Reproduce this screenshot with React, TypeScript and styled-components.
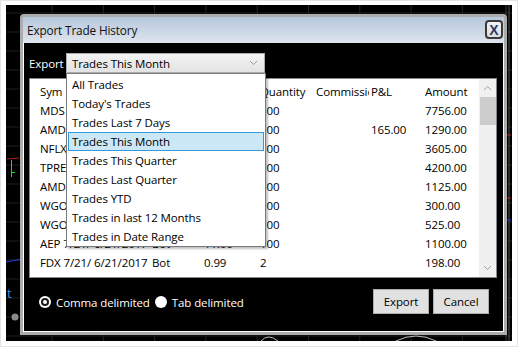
import React from "react";
import styled, { createGlobalStyle } from "styled-components";

const GlobalStyle = createGlobalStyle`
  html, body { margin: 0; padding: 0; background: #ffffff; }
  body { font-family: "Open Sans", "Noto Sans", sans-serif; font-size: 12px; }
  * { box-sizing: border-box; }
`;

const UI = `"Open Sans", "Noto Sans", sans-serif`;

const Frame = styled.div`
  width: 518px;
  height: 347px;
  border: 1px solid #e4e4e4;
  padding: 4px 5px 5px 5px;
  background: #fff;
`;

const Screen = styled.div`
  position: relative;
  width: 506px;
  height: 336px;
  background: #000;
  overflow: hidden;
`;

const ChartLayer = styled.svg`
  position: absolute;
  inset: 0;
`;

const Dialog = styled.div`
  position: absolute;
  left: 14px;
  top: 9px;
  width: 487px;
  height: 321px;
  border: 3px solid #acacac;
  border-radius: 4px 4px 0 0;
  display: flex;
  flex-direction: column;
  background: #000;
`;

const TitleBar = styled.div`
  height: 26px;
  flex: none;
  display: flex;
  align-items: flex-start;
  justify-content: space-between;
  background: linear-gradient(#b6c7dc, #dfe5ed);
  padding-left: 4px;
`;

const Title = styled.span`
  font-family: ${UI};
  font-size: 11.8px;
  letter-spacing: -0.15px;
  color: #111;
  line-height: 26px;
`;

const CloseButton = styled.div`
  width: 18px;
  height: 19px;
  margin: 3px 1px 0 0;
  border: 2px solid #3a3a3a;
  border-radius: 4px;
  background: linear-gradient(#f4f4f4, #dcdcdc);
  display: flex;
  align-items: center;
  justify-content: center;
  font-family: "Liberation Sans", Arial, sans-serif;
  font-weight: bold;
  font-size: 14px;
  color: #2a3a6a;
  line-height: 1;
`;

const Body = styled.div`
  flex: 1;
  display: flex;
  flex-direction: column;
  border: 1px solid #ffffff;
  border-top: none;
  background: #000;
  position: relative;
`;

const ExportRow = styled.div`
  display: flex;
  align-items: center;
  padding: 10px 0 0 5px;
  height: 30px;
`;

const WhiteLabel = styled.span<{ $w?: number }>`
  font-family: ${UI};
  font-size: 11.5px;
  letter-spacing: -0.1px;
  color: #fff;
  white-space: nowrap;
  ${(p) => (p.$w ? `width: ${p.$w}px;` : "")}
`;

const SelectWrap = styled.div`
  position: relative;
  margin-left: 5px;
  width: 199px;
  height: 20px;
  z-index: 2;
`;

const SelectBox = styled.div`
  height: 20px;
  border: 1px solid #acacac;
  background: linear-gradient(#f3f3f3, #e3e3e3);
  display: flex;
  align-items: center;
  justify-content: space-between;
  padding: 0 6px 0 5px;
  font-family: ${UI};
  font-size: 11.5px;
  letter-spacing: -0.1px;
  color: #000;
`;

const List = styled.div`
  position: absolute;
  left: 0;
  top: 20px;
  width: 200px;
  border: 1px solid #7a7a7a;
  background: #fff;
  padding: 1px 0 0 0;
  box-shadow: 2px 2px 2px rgba(0, 0, 0, 0.25);
`;

const ListItem = styled.div<{ $active?: boolean }>`
  height: 19px;
  margin: 0 1px;
  padding-left: 3px;
  border: 1px solid ${(p) => (p.$active ? "#3399dd" : "transparent")};
  background: ${(p) => (p.$active ? "#cce8f7" : "transparent")};
  font-family: ${UI};
  font-size: 11.5px;
  letter-spacing: -0.1px;
  line-height: 17px;
  color: #000;
  white-space: nowrap;
`;

const Table = styled.div`
  margin: 5px 0 0 5px;
  width: 468px;
  height: 200px;
  border: 1px solid #828790;
  background: #fff;
  display: flex;
`;

const GridArea = styled.div`
  flex: 1;
  overflow: hidden;
  padding: 3px 0 0 8px;
`;

const Row = styled.div`
  display: grid;
  grid-template-columns: 54px 58px 52px 56px 56px 55px 54px 56px;
  height: 19px;
`;

const Cell = styled.div`
  padding-left: 2px;
  overflow: hidden;
  white-space: nowrap;
  font-family: ${UI};
  font-size: 11.5px;
  letter-spacing: -0.1px;
  line-height: 19px;
  color: #000;
`;

const Scrollbar = styled.div`
  width: 17px;
  background: #f0f0f0;
  display: flex;
  flex-direction: column;
  align-items: center;
`;

const ScrollArrow = styled.div`
  height: 18px;
  width: 17px;
  display: flex;
  align-items: center;
  justify-content: center;
`;

const ScrollTrack = styled.div`
  flex: 1;
  width: 17px;
  display: flex;
  flex-direction: column;
  align-items: center;
`;

const Thumb = styled.div`
  width: 16px;
  height: 28px;
  background: #cdcdcd;
`;

const BottomRow = styled.div`
  display: flex;
  align-items: center;
  justify-content: space-between;
  padding: 11px 14px 0 15px;
`;

const RadioGroup = styled.div`
  display: flex;
  align-items: center;
  gap: 5px;
  padding-top: 1px;
`;

const RadioOption = styled.label`
  display: flex;
  align-items: center;
  gap: 5px;
`;

const RadioDot = styled.span<{ $checked?: boolean }>`
  width: 12px;
  height: 12px;
  border-radius: 50%;
  background: #fff;
  display: inline-flex;
  align-items: center;
  justify-content: center;
  &::after {
    content: "";
    display: ${(p) => (p.$checked ? "block" : "none")};
    width: 4px;
    height: 4px;
    border-radius: 50%;
    background: #fff;
    box-shadow: 0 0 0 2px #1a1a1a;
  }
`;

const Buttons = styled.div`
  display: flex;
  gap: 4px;
`;

const Button = styled.div`
  width: 56px;
  height: 25px;
  border: 1px solid #adadad;
  background: #e1e1e1;
  display: flex;
  align-items: center;
  justify-content: center;
  font-family: ${UI};
  font-size: 11.5px;
  letter-spacing: -0.1px;
  color: #000;
`;

const Chevron = ({ up }: { up?: boolean }) => (
  <svg width="9" height="6" viewBox="0 0 9 6">
    <path
      d={up ? "M1 5 L4.5 1.5 L8 5" : "M1 1 L4.5 4.5 L8 1"}
      fill="none"
      stroke="#a0a0a0"
      strokeWidth="1"
    />
  </svg>
);

const options = [
  "All Trades",
  "Today's Trades",
  "Trades Last 7 Days",
  "Trades This Month",
  "Trades This Quarter",
  "Trades Last Quarter",
  "Trades YTD",
  "Trades in last 12 Months",
  "Trades in Date Range",
];

const header = ["Sym", "Date/Time", "Action", "Price", "Quantity", "Commission", "P&L", "Amount"];

const rows: string[][] = [
  ["MDS 7/21/", "6/21/2017", "Bot", "77.56", "100", "", "", "7756.00"],
  ["AMD 7/21/", "6/21/2017", "Sld", "12.90", "100", "", "165.00", "1290.00"],
  ["NFLX 7/21/", "6/21/2017", "Bot", "36.05", "100", "", "", "3605.00"],
  ["TPRE 7/21/", "6/21/2017", "Bot", "42.00", "100", "", "", "4200.00"],
  ["AMD 7/21/", "6/21/2017", "Bot", "11.25", "100", "", "", "1125.00"],
  ["WGO 7/21/", "6/21/2017", "Bot", "3.00", "100", "", "", "300.00"],
  ["WGO 7/21/", "6/21/2017", "Sld", "5.25", "100", "", "", "525.00"],
  ["AEP 7/21/", "6/21/2017", "Bot", "11.00", "100", "", "", "1100.00"],
  ["FDX 7/21/", "6/21/2017", "Bot", "0.99", "2", "", "", "198.00"],
  ["FDX 7/21/", "6/21/2017", "Sld", "0.89", "2", "", "", "178.00"],
];

const Chart = () => {
  const verticals = Array.from({ length: 10 }, (_, i) => 46 + i * 51.3);
  const horizontals = Array.from({ length: 18 }, (_, i) => 8 + i * 19);
  return (
    <ChartLayer width="506" height="336" viewBox="0 0 506 336">
      {verticals.map((x) => (
        <line key={"v" + x} x1={x} y1="0" x2={x} y2="336" stroke="#262626" strokeWidth="1" />
      ))}
      {horizontals.map((y) => (
        <line key={"h" + y} x1="0" y1={y} x2="506" y2={y} stroke="#1e1e1e" strokeWidth="1" />
      ))}
      <line x1="1" y1="154" x2="13" y2="153" stroke="#b02020" strokeWidth="1" />
      <line x1="5.5" y1="155" x2="5.5" y2="172" stroke="#19e019" strokeWidth="1" />
      <line x1="5.5" y1="167.5" x2="9" y2="167.5" stroke="#19e019" strokeWidth="1" />
      <line x1="0" y1="257" x2="16" y2="254" stroke="#2a3bd8" strokeWidth="1.2" />
      <text x="1" y="293" fill="#3d8fd6" fontFamily="Open Sans, sans-serif" fontSize="13">t</text>
      <circle cx="9" cy="312" r="3.5" fill="#8a8a8a" />
      <line x1="500" y1="0" x2="500" y2="336" stroke="#3a3a3a" strokeWidth="1" />
      <line x1="503" y1="0" x2="503" y2="336" stroke="#555" strokeWidth="1" />
      <line x1="500" y1="130" x2="505" y2="130" stroke="#c02020" strokeWidth="1" />
      <line x1="500" y1="193" x2="505" y2="193" stroke="#c02020" strokeWidth="1" />
      <line x1="500" y1="215" x2="505" y2="215" stroke="#2a3bd8" strokeWidth="1" />
      <path d="M255 336 Q262 328 272 336" fill="none" stroke="#bbb" strokeWidth="1" />
      <path d="M390 336 Q410 326 430 336" fill="none" stroke="#bbb" strokeWidth="1" />
    </ChartLayer>
  );
};

export default function App() {
  return (
    <>
      <GlobalStyle />
      <Frame>
        <Screen>
          <Chart />
          <Dialog>
            <TitleBar>
              <Title>Export Trade History</Title>
              <CloseButton>X</CloseButton>
            </TitleBar>
            <Body>
              <ExportRow>
                <WhiteLabel $w={32}>Export</WhiteLabel>
                <SelectWrap>
                  <SelectBox>
                    <span>Trades This Month</span>
                    <Chevron />
                  </SelectBox>
                  <List>
                    {options.map((o) => (
                      <ListItem key={o} $active={o === "Trades This Month"}>
                        {o}
                      </ListItem>
                    ))}
                  </List>
                </SelectWrap>
              </ExportRow>
              <Table>
                <GridArea>
                  <Row>
                    {header.map((h) => (
                      <Cell key={h}>{h}</Cell>
                    ))}
                  </Row>
                  {rows.map((r, i) => (
                    <Row key={i}>
                      {r.map((c, j) => (
                        <Cell key={j}>{c}</Cell>
                      ))}
                    </Row>
                  ))}
                </GridArea>
                <Scrollbar>
                  <ScrollArrow>
                    <Chevron up />
                  </ScrollArrow>
                  <ScrollTrack>
                    <Thumb />
                  </ScrollTrack>
                  <ScrollArrow>
                    <Chevron />
                  </ScrollArrow>
                </Scrollbar>
              </Table>
              <BottomRow>
                <RadioGroup>
                  <RadioOption>
                    <RadioDot $checked />
                    <WhiteLabel>Comma delimited</WhiteLabel>
                  </RadioOption>
                  <RadioOption>
                    <RadioDot />
                    <WhiteLabel>Tab delimited</WhiteLabel>
                  </RadioOption>
                </RadioGroup>
                <Buttons>
                  <Button>Export</Button>
                  <Button>Cancel</Button>
                </Buttons>
              </BottomRow>
            </Body>
          </Dialog>
        </Screen>
      </Frame>
    </>
  );
}
